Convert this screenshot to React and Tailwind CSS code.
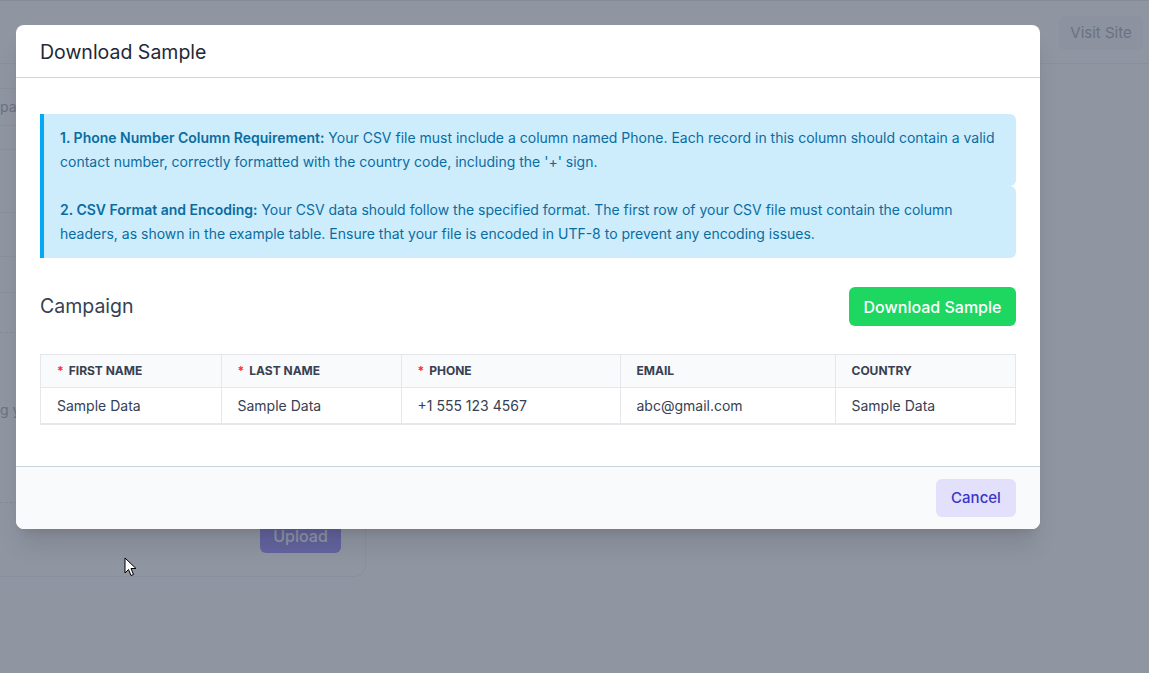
import React from "react";

const font = { fontFamily: "Inter, 'Noto Sans', 'Liberation Sans', sans-serif" };

function Background() {
  return (
    <div className="w-[1149px] h-[673px] bg-white border-t border-[#d6d6d6]">
      <div className="h-[63px] border-b border-gray-200 flex justify-end items-start pr-[6px] pt-[15px]">
        <div className="h-[34px] w-[84px] rounded-md bg-gray-100 text-gray-500 text-[15px] flex items-center justify-center">
          Visit Site
        </div>
      </div>
      <div className="flex">
        <div className="w-[376px] h-[513px] -ml-[10px] border-r border-b border-gray-200 rounded-br-xl flex flex-col">
          <div className="h-[25px] shrink-0 border-b border-gray-200" />
          <div className="h-[37px] shrink-0 border-b border-gray-200 pl-[10px] text-gray-500 text-sm flex items-center">paign name</div>
          <div className="h-[24px] shrink-0 border-b border-gray-200" />
          <div className="h-[63px] shrink-0 border-b border-gray-200" />
          <div className="h-[44px] shrink-0 border-b border-gray-200" />
          <div className="h-[36px] shrink-0 border-b border-gray-200" />
          <div className="h-[40px] shrink-0 border-b border-dashed border-gray-300 mx-[10px]" />
          <div className="h-[62px] shrink-0" />
          <div className="h-[30px] shrink-0 pl-[10px] text-gray-500 text-sm flex items-center">g your file</div>
          <div className="h-[78px] shrink-0 border-b border-dashed border-gray-300 mx-[10px]" />
          <div className="flex justify-end pt-[15px] pr-[24px]">
            <div className="w-[81px] h-[35px] rounded-md bg-indigo-600 text-white text-base font-medium flex items-center justify-center">Upload</div>
          </div>
        </div>
      </div>
    </div>
  );
}

function Cursor() {
  return (
    <svg className="absolute left-[124px] top-[557px]" width="13" height="20" viewBox="0 0 13 20">
      <path d="M1 1 L1 16 L4.5 12.5 L7 18.5 L9.5 17.5 L7 11.5 L12 11.5 Z" fill="white" stroke="black" strokeWidth="1" strokeLinejoin="round" />
    </svg>
  );
}

function Req() {
  return <span className="text-red-500 mr-[5px]">*</span>;
}

export default function App() {
  const cols = [
    { label: "FIRST NAME", req: true, w: "w-[180px]", val: "Sample Data" },
    { label: "LAST NAME", req: true, w: "w-[180px]", val: "Sample Data" },
    { label: "PHONE", req: true, w: "w-[219px]", val: "+1 555 123 4567" },
    { label: "EMAIL", req: false, w: "w-[215px]", val: "abc@gmail.com" },
    { label: "COUNTRY", req: false, w: "", val: "Sample Data" },
  ];
  return (
    <div className="relative w-[1149px] h-[673px] overflow-hidden" style={font}>
      <Background />
      <div className="absolute inset-0 bg-gray-500/75" />
      <Cursor />
      <div className="absolute left-[16px] top-[25px] w-[1024px] bg-white rounded-lg shadow-xl overflow-hidden">
        <div className="h-[53px] border-b border-[#cbd5e1] px-6 flex items-center">
          <h2 className="text-[19.5px] text-gray-800 leading-7 pt-[1px]">Download Sample</h2>
        </div>
        <div className="px-6 pt-[36px] pb-[41px]">
          <div className="text-sm leading-6 text-[#0b6c9f]">
            <div className="bg-[#cdedfd] border-l-4 border-[#03a9f4] rounded-r-md pl-4 pr-4 py-3">
              <span className="font-semibold">1. Phone Number Column Requirement:</span> Your CSV file must include a column named Phone. Each record in this column should contain a valid contact number, correctly formatted with the country code, including the '+' sign.
            </div>
            <div className="bg-[#cdedfd] border-l-4 border-[#03a9f4] rounded-r-md pl-4 pr-4 py-3">
              <span className="font-semibold">2. CSV Format and Encoding:</span> Your CSV data should follow the specified format. The first row of your CSV file must contain the column headers, as shown in the example table. Ensure that your file is encoded in UTF-8 to prevent any encoding issues.
            </div>
          </div>
          <div className="flex items-center justify-between mt-[29px]">
            <h3 className="text-[19.5px] text-gray-700">Campaign</h3>
            <button className="h-[39px] w-[167px] rounded-md bg-[#1ed760] text-white text-base font-medium flex items-center justify-center">
              Download Sample
            </button>
          </div>
          <div className="mt-[28px] border border-gray-200 border-b-2">
            <table className="w-full table-fixed border-collapse">
              <thead>
                <tr className="bg-gray-50 border-b border-gray-200">
                  {cols.map((c, i) => (
                    <th
                      key={c.label}
                      className={`${c.w} h-[32px] px-4 text-left text-xs font-bold text-gray-700 ${i < cols.length - 1 ? "border-r border-gray-200" : ""}`}
                    >
                      {c.req && <Req />}
                      {c.label}
                    </th>
                  ))}
                </tr>
              </thead>
              <tbody>
                <tr>
                  {cols.map((c, i) => (
                    <td
                      key={c.label}
                      className={`h-[36px] px-4 pt-[1px] text-sm text-gray-700 ${i < cols.length - 1 ? "border-r border-gray-200" : ""}`}
                    >
                      {c.val}
                    </td>
                  ))}
                </tr>
              </tbody>
            </table>
          </div>
        </div>
        <div className="border-t border-[#cbd5e1] bg-gray-50 h-[63px] px-6 flex items-center justify-end">
          <button className="h-[38px] w-[80px] rounded-md bg-[#e2e0fb] text-[#3b35c7] text-[15px] font-medium flex items-center justify-center">
            Cancel
          </button>
        </div>
      </div>
    </div>
  );
}
